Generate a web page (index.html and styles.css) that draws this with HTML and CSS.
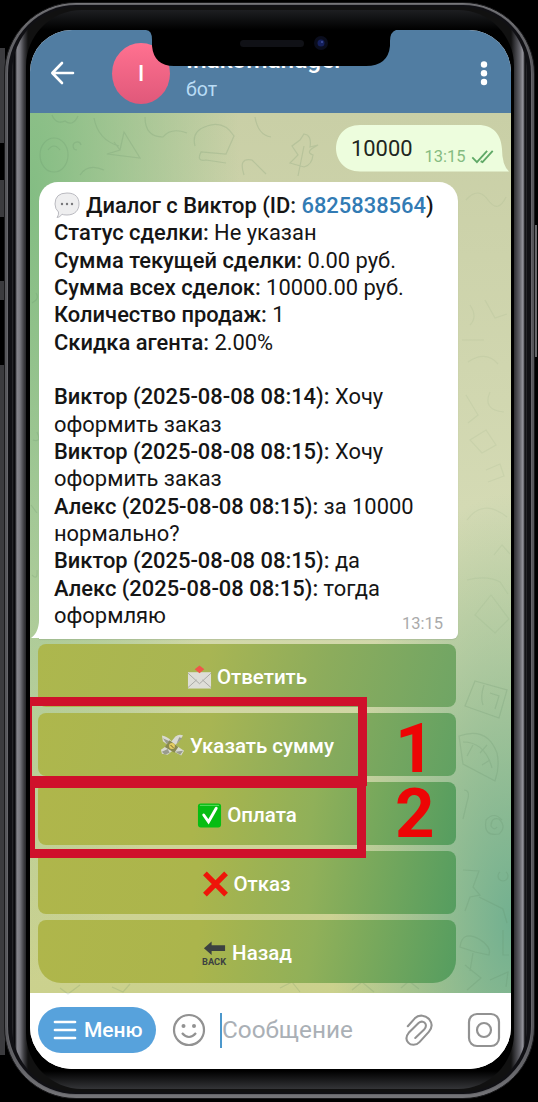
FILE: index.html
```html
<!DOCTYPE html>
<html lang="ru">
<head>
<meta charset="utf-8">
<title>Чат с ботом</title>
<link rel="stylesheet" href="styles.css">
</head>
<body>
<div class="stage">
  <i class="side-key key-top"></i><i class="side-key key-mute"></i><i class="side-key key-up"></i><i class="side-key key-down"></i><i class="side-key key-power"></i>
  <div class="metal"><div class="bezel-ring"><div class="bezel-shine"><div class="bezel">
    <main class="screen">
      <header class="topbar">
        <svg class="back" viewBox="0 0 24 24"><path d="M22.5 12H2M11.5 2 1.8 12l9.7 10"/></svg>
        <div class="avatar">I</div>
        <div class="title"><b>Inakomanager</b><span>бот</span></div>
        <svg class="dots" viewBox="0 0 8 26"><circle cx="4" cy="3.5" r="3.2"/><circle cx="4" cy="12.2" r="3.2"/><circle cx="4" cy="21" r="3.2"/></svg>
      </header>
      <section class="chat">
        <svg class="doodles" viewBox="30 113 481 880">
          <g>
            <path d="M52 115q4 10 13 6 8 6 13-5M94 118q4 22 25 28M107 154l33 4-16-26-4 18zM120 150l-6-8M145 117q0 20 18 20 8-10 24-4M195 146q-4-15 12-20 17-6 27 10l-8 18-25-2q-5 10 5 8l20 3M81 145a4 4 0 1 0-4 5M80 175q8-12 24-5M244 175q-6-18 8-15l14 14M255 117q3 18 16 20"/>
            <ellipse cx="54" cy="155" rx="14" ry="17"/>
            <path d="M48 150q6-8 12 0M300 140l-8 6 6 9-8 8 14 4q8-2 9-12-9-3 5-10l-8 2q2-12-6-13zM298 176l6-30"/>
          </g>
          <g class="faint">
            <path d="M466 200q12-14 22 0t18-3M470 305q8 12 0 20M485 300l10 18 12-4M462 340h22M468 362q18-12 30 2M466 395l12 20-10 8M490 392q-8 18 14 20M470 440l16-10 10 15-14 8zM486 470l14-6 4 12-16 6M467 520q16-22 40-3M467 580q20-5 33 2l8 12M475 615l16-20 18 24-14 14zM494 555l8-10 8 9"/>
          </g>
          <g>
            <path d="m475 681 32 9-8 28-34-12zM484 685q-4 12-1 20M490 693l9 3-4 13"/>
            <path d="M459 736q28-10 38 17 3 14-2 28l-32-17zM463 742q22 0 29 26M473 745l-6 11M480 753l7-8M482 765l8-5"/>
            <path d="M464 790q7 0 3 12l-4 17M502 820q-8-9-16 0-3 17 13 14 8-7 0-15-8-2-8 7 3 5 6 1M463 870l16 1-6 16 7 8-10 2-5 14M479 897l24 12 4 14M460 947q2-17 19-8 13 8 10 16l-14-3zM473 953l-3 18M465 965l16 13-14 12M490 980l18-8-2 15M500 872a5 5 0 1 0 6 0M503 930v25h6"/>
            <path d="M32 303q8-4 4-10M33 440q9 3 4-8M31 505l6 8M32 575q6 6 5-5M60 988l8 6 12-9M112 987l11 5 7-8M280 988l12-6 8 10M352 990l10-8 12 10M401 988l8-7 10 8"/>
          </g>
        </svg>
        <div class="sent">
          <svg class="sent-shape" viewBox="0 0 172 50"><path d="M24 1H142C158 1 165 11 166 25Q166 41 173 47.500H24C-8 47.500-8 1 24 1Z"/></svg>
          <span class="sum">10000</span><span class="sent-time">13:15</span>
          <svg class="checks" viewBox="0 0 24 14"><path d="M1 8l5 5L17 1M10 12l2 1L23 1"/></svg>
        </div>
        <article class="message">
          <svg class="tail" viewBox="0 0 10 24"><path d="M10 0H9Q10 17 1 23H10Z"/></svg>
          <p><svg class="bubble-icon" viewBox="0 0 26 27"><path d="M13 1C22 1 25 6 25 12S21 23 13 23Q9 23 8 22.2 6 25.5 3 25.5 5 23 4.5 20 1 17 1 12 1 1 13 1Z"/><g><circle cx="8" cy="12" r="1.2"/><circle cx="13" cy="12" r="1.2"/><circle cx="18" cy="12" r="1.2"/></g></svg><b>Диалог с Виктор (ID: <a>6825838564</a>)</b></p>
          <p><b>Статус сделки:</b> Не указан</p>
          <p><b>Сумма текущей сделки:</b> 0.00 руб.</p>
          <p><b>Сумма всех сделок:</b> 10000.00 руб.</p>
          <p><b>Количество продаж:</b> 1</p>
          <p><b>Скидка агента:</b> 2.00%</p>
          <p>&nbsp;</p>
          <p><b>Виктор (2025-08-08 08:14):</b> Хочу</p>
          <p>оформить заказ</p>
          <p><b>Виктор (2025-08-08 08:15):</b> Хочу</p>
          <p>оформить заказ</p>
          <p><b>Алекс (2025-08-08 08:15):</b> за 10000</p>
          <p>нормально?</p>
          <p><b>Виктор (2025-08-08 08:15):</b> да</p>
          <p><b>Алекс (2025-08-08 08:15):</b> тогда</p>
          <p class="last"><span>оформляю</span><time>13:15</time></p>
        </article>
        <div class="actions">
          <div class="action"><svg viewBox="0 0 26 26"><path fill="#deded8" d="M1 8h24v17H1z"/><path fill="none" stroke="#a9a9a4" d="m1 9 12 11L25 9M1 24l9-8m15 8-9-8"/><path fill="#ef5649" d="m13 1 5 4-5 4-5-4z"/></svg><span>Ответить</span></div>
          <div class="action"><svg viewBox="0 0 26 26"><path fill="#d9dad2" d="M2 2q6 1 10 6l4-5q4-3 8-1l-5 7-3 3 9 6-3 5-9-5-5 4-6-1-1-4 7-5-5-4z"/><path fill="#999b8d" d="m3 5 7 3-3 3zm17-1 3 1-6 6zM2 19l6-3 2 4-5 2zm14 0 8-1-3 4z"/><path fill="#888951" d="m10 7 9 7-4 6-10-6z"/><circle cx="12.5" cy="13" r="3" fill="#e5cd61"/><path stroke="#675e32" d="m11 12 3 3"/></svg><span>Указать сумму</span></div>
          <div class="action"><svg viewBox="0 0 26 26"><rect x="1" y="1" width="24" height="25" rx="3" fill="#06bd13"/><path fill="none" stroke="#64dc63" d="M3 3h20"/><path fill="none" stroke="#fff" stroke-width="3" stroke-linecap="round" d="m7 13 5 7L20 6"/></svg><span>Оплата</span></div>
          <div class="action"><svg viewBox="0 0 26 26"><path stroke="#ef1509" stroke-width="5.500" d="m2 2 22 22M24 2 2 24"/></svg><span>Отказ</span></div>
          <div class="action"><svg viewBox="0 0 26 26"><path fill="#3c4141" d="m2 8 8-7v4h14v6H10v4z"/><text x="0" y="25.500" textLength="25" lengthAdjust="spacingAndGlyphs">BACK</text></svg><span>Назад</span></div>
          <i class="mark mark-one"></i><i class="mark mark-two"></i>
          <strong class="number number-one">1</strong><strong class="number number-two">2</strong>
        </div>
      </section>
      <footer class="composer">
        <div class="menu"><svg viewBox="0 0 24 20"><path d="M2 2h20M2 10h20M2 18h20"/></svg><span>Меню</span></div>
        <svg class="smile" viewBox="0 0 34 34"><circle cx="17" cy="17" r="15"/><path d="M10 20q7 8 14 0"/><g><circle cx="11.5" cy="13" r="2"/><circle cx="22" cy="13" r="2"/></g></svg>
        <div class="field">Сообщение</div>
        <svg class="clip" viewBox="0 0 30 34"><path d="M3 13 10.500 4.500C15 0 22 1 26 5.500C29.500 10 29 15 25.500 19L15.500 30C12 34 6 33.500 3.500 30.500C.5 27 1.500 23 4 20L14.500 9.500C17.500 7 21 8 22 10.500C23 13 22 15 20.500 16.500L11 25.500"/></svg>
        <svg class="camera" viewBox="0 0 34 34"><rect x="2" y="1" width="30" height="32" rx="8"/><circle cx="17" cy="17" r="7"/></svg>
      </footer>
    </main>
  </div></div></div></div>
  <svg class="notch" viewBox="0 0 250 38"><path d="M0 0H250Q244 2 244 11V16Q242 36 220 36H28Q8 36 6 16V10Q6 0 0 0Z"/><rect x="94" y="10" width="64" height="7" rx="3.500" fill="#101116"/><circle cx="175" cy="13" r="7" fill="#0a0d1d"/><circle cx="175" cy="13" r="3.500" fill="#15205d"/><circle cx="176" cy="12" r="1" fill="#4051a1"/></svg>
</div>
</body>
</html>
```
FILE: styles.css
```css
*{box-sizing:border-box}
body{margin:0;background:#000;font-family:Roboto,"Liberation Sans",sans-serif}
svg{display:block;flex:none;overflow:visible}
p{margin:0}
.stage{position:relative;width:538px;height:1102px;padding:2px 3px 3px 4px;background:#000;overflow:hidden}
.side-key{position:absolute;left:0;width:5px;background:#3b3b3e}
.key-top{top:48px;height:95px}.key-mute{top:180px;height:37px}.key-up{top:281px;height:19px}.key-down{top:365px;height:690px}.key-power{left:auto;right:1px;top:225px;height:132px;background:#68686b}
.metal{position:relative;height:1097px;border-radius:72px;padding:2px 3px 4px;background:linear-gradient(#77777a,#56565a 6%,#56565a 94%,#747478);border:1px solid #19191b}
.bezel-ring{height:100%;border-radius:68px;padding:2px 4px;background:#101014;box-shadow:0 0 0 1px #65656a}
.bezel-shine{height:100%;border-radius:65px;padding:3px 13px 3px 14px;background:linear-gradient(90deg,#303034,#08080b 2px,#08080b 3px,#85858c 5px,#77777e 8px,#3c3c40 12px,#111 16px,#111 calc(100% - 16px),#38383c calc(100% - 12px),#66666d calc(100% - 7px),#96969e calc(100% - 4px),#08080b calc(100% - 2px),#303034)}
.bezel{height:100%;border-radius:56px;padding:20px 3px 20px 4px;background:linear-gradient(#1d1e21,#000 20px,#000 calc(100% - 18px),#343538);display:flex}
.screen{flex:1;min-width:0;border-radius:42px;overflow:hidden;display:flex;flex-direction:column;background:#fff}
.topbar{height:83px;flex:none;background:#517da2;display:flex;align-items:flex-start;padding:13px 23px 0 20px}
.back{width:25px;height:24px;margin-top:18px}.back path{fill:none;stroke:#fff;stroke-width:2.600;stroke-linecap:round;stroke-linejoin:round}
.avatar{width:58px;height:61px;border-radius:50%;background:linear-gradient(#ff7190,#e0587a);margin-left:37px;color:#fff;font-size:22px;font-weight:500;display:flex;align-items:center;justify-content:center}
.title{margin-left:16px;display:flex;flex-direction:column;color:#fff}
.title b{font-size:24.400px;line-height:27px;margin-top:3px;font-weight:500}.title span{font-size:19.500px;line-height:24px;margin-top:5px;color:#b9dcf5}
.dots{width:8px;height:26px;margin:18px 0 0 auto;fill:#fff}
.chat{position:relative;height:880px;flex:none;display:flex;flex-direction:column;background:radial-gradient(ellipse 180px 430px at 100% 92%,#72b090,#72b09000),radial-gradient(ellipse 210px 780px at 0 10%,#83bd83,#83bd8300),linear-gradient(#c9cfa6,#d4dab4 45%,#cbd18d)}
.doodles{position:absolute;inset:0;width:481px;height:880px}.doodles g{fill:none;stroke:#56815c;stroke-opacity:.17;stroke-width:1.200}.doodles .faint{stroke-opacity:.07}
.sent{position:relative;height:50px;width:172px;align-self:flex-end;margin:11px 3px 0 0;display:flex;align-items:flex-start}
.sent-shape{position:absolute;inset:0;width:172px;height:50px;fill:#edfddd}
.sum{position:relative;font-size:21.900px;line-height:28px;margin:11px 0 0 15px;color:#202620}
.sent-time{position:relative;font-size:16.500px;line-height:20px;margin:23px 0 0 12px;color:#85bb80}
.checks{position:relative;width:23px;height:13px;margin:26px 0 0 5px}.checks path{fill:none;stroke:#60a967;stroke-width:2}
.message{position:relative;width:419px;height:457px;margin:8px 0 0 9px;border-radius:19px 19px 6px 0;background:#fff;padding:10px 15px 0;color:#151515;font-size:21.900px;line-height:27.350px;white-space:nowrap;box-shadow:0 1px 1px #849b8155}
.message b{font-weight:500}.message a{color:#327bb4}.message p{height:27.350px}
.message p:nth-of-type(1){display:flex}
.bubble-icon{width:26px;height:27px;margin-right:6px}.bubble-icon path{fill:#eeeeef;stroke:#babac0}.bubble-icon g{fill:#77777a}
.tail{position:absolute;left:-9px;bottom:0;width:10px;height:24px;fill:#fff}
.last{display:flex;justify-content:space-between}.last time{font-size:16.500px;color:#aaa;margin-top:8px}
.actions{position:relative;margin:5px 0 0 8px;width:418px;display:grid;grid-template-rows:repeat(5,63px);gap:6px}
.action{border-radius:8px;background:linear-gradient(100deg,#afb64b,#abb54c 38%,#90b059 65%,#559d60);display:flex;align-items:center;justify-content:center;gap:5px;color:#fff;font-size:20.500px;font-weight:500;padding-top:2px}
.action:nth-child(1){background:linear-gradient(105deg,#adb74d,#a8b553 40%,#8cac5c 68%,#6fa565)}
.action:nth-child(2){background:linear-gradient(105deg,#aeb74c,#a8b553 40%,#88ab5c 68%,#61a163)}
.action:nth-child(5){border-radius:8px 8px 23px 23px}
.action svg{width:25px;height:26px}.action text{font:700 9.500px Roboto,sans-serif;fill:#3c4141}
.mark{position:absolute;border:9px solid #cf102b}.mark-one{left:-8px;top:53px;width:337px;height:89px;border-left-width:2px}.mark-two{left:-8px;top:132px;width:336px;height:82px;border-left-width:5px;border-top-width:12px}
.number{position:absolute;left:357px;font-size:69px;line-height:64px;height:64px;color:#ed0505}.number-one{top:73px}.number-two{top:138px}
.composer{flex:1;background:#fff;display:flex;align-items:center;padding:0 10px 2px 8px}
.menu{width:118px;height:46px;border-radius:23px;background:#57a2dc;display:flex;align-items:center;padding-left:15px;gap:7px;color:#fff;font-size:21px;font-weight:500}
.menu svg{width:24px;height:20px}.menu path{stroke:#fff;stroke-width:2.700;stroke-linecap:round}
.smile{width:34px;height:34px;margin-left:16px;fill:none;stroke:#929292;stroke-width:2.200}.smile g{fill:#929292;stroke:none}
.field{border-left:2px solid #4c98cc;height:35px;line-height:34px;margin-left:14px;color:#aab0b6;font-size:24.300px}
.clip{width:28px;height:34px;margin-left:auto;fill:none;stroke:#929292;stroke-width:2.200;stroke-linecap:round}
.camera{width:34px;height:34px;margin-left:34px;fill:none;stroke:#929292;stroke-width:2.200}
.notch{position:absolute;left:146px;top:30px;width:250px;height:38px;fill:#000}
```
